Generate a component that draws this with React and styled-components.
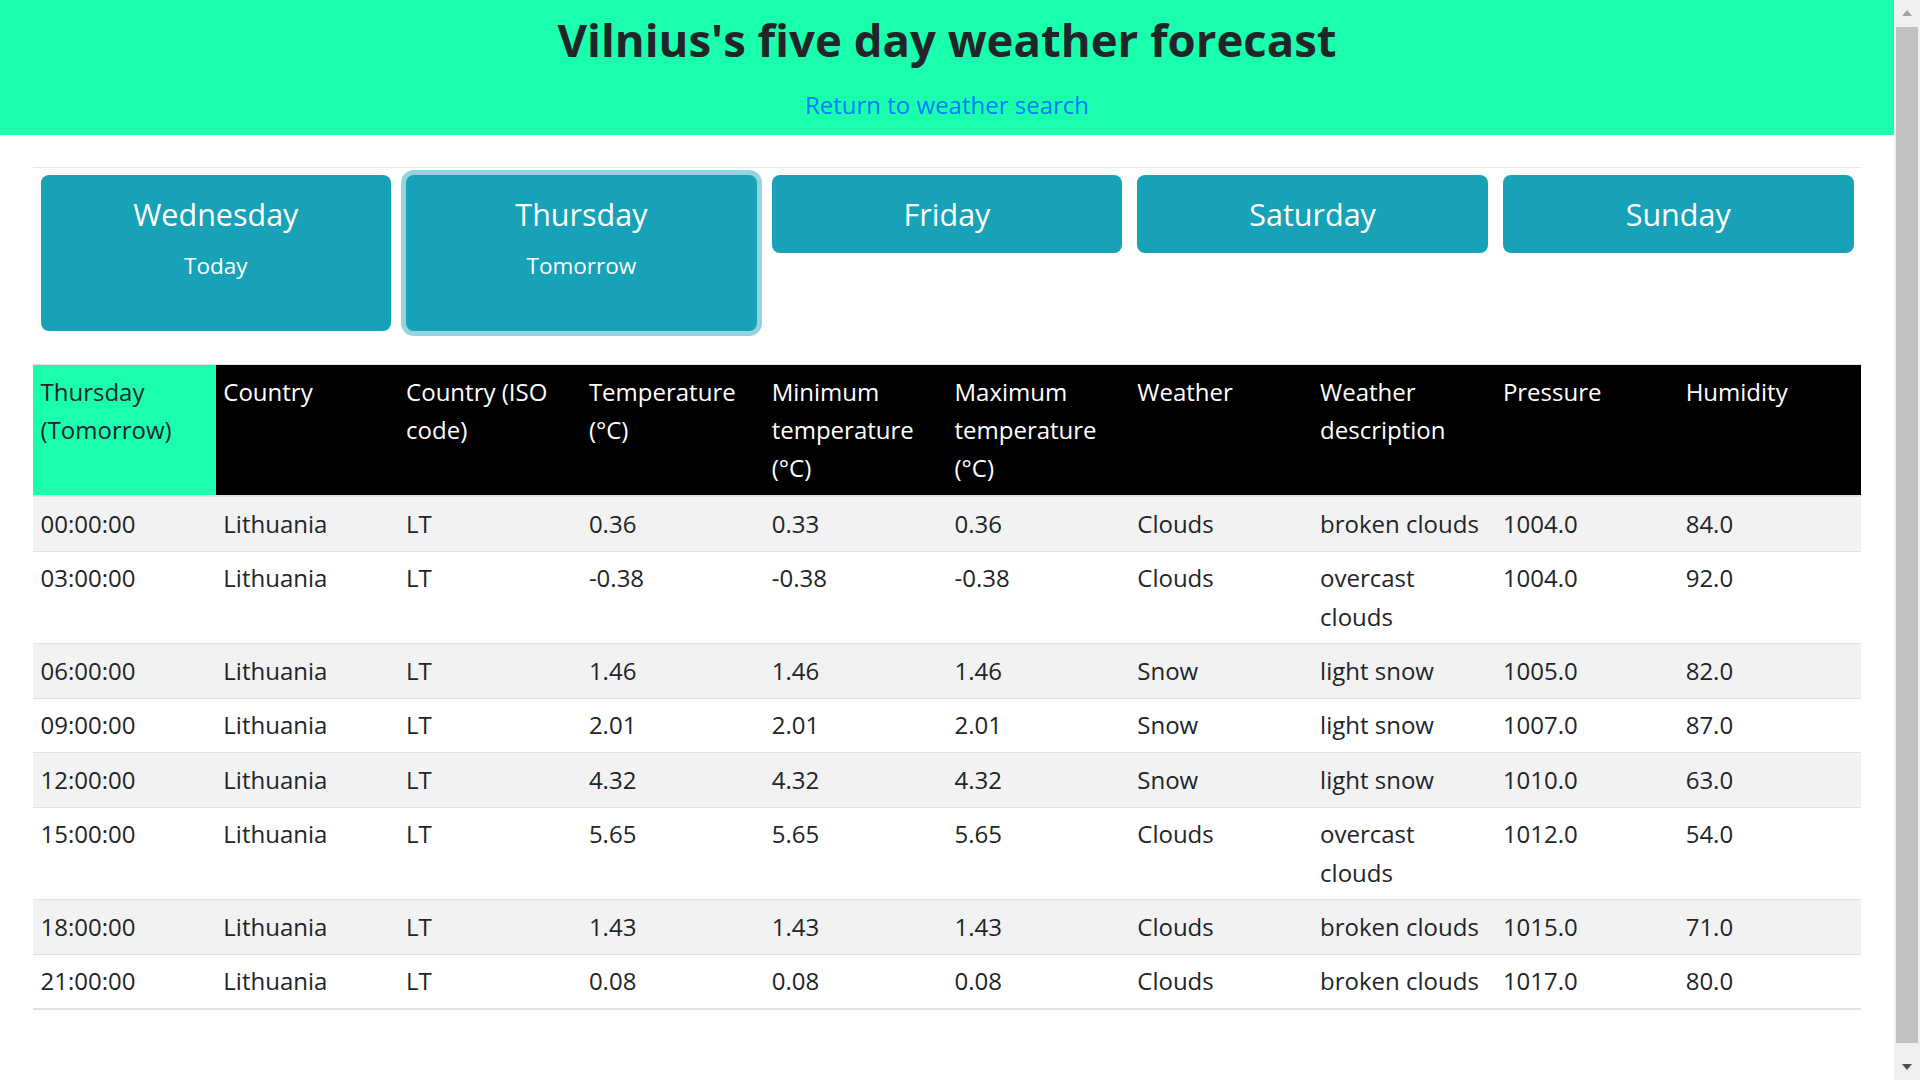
import React from "react";
import styled, { createGlobalStyle, css } from "styled-components";

const GlobalStyle = createGlobalStyle`
  html, body { margin: 0; padding: 0; }
  body {
    font-family: "Open Sans", "Noto Sans", "Liberation Sans", sans-serif;
    color: #212529;
    background: #fff;
  }
  * { box-sizing: border-box; }
`;

const Page = styled.div`
  margin-right: 26px;
`;

const Header = styled.header`
  background: #1affad;
  text-align: center;
  padding: 13px 0 12px;
`;

const Title = styled.h1`
  margin: 0;
  font-size: 45.5px;
  line-height: 53px;
  font-weight: 700;
  color: #212529;
`;

const BackLink = styled.a`
  display: inline-block;
  margin-top: 21px;
  font-size: 24px;
  line-height: 36px;
  color: #007bff;
  text-decoration: none;
`;

const Main = styled.main`
  padding: 0 33px 83px;
`;

const Divider = styled.hr`
  margin: 32px 0 7px;
  border: 0;
  border-top: 1px solid rgba(0, 0, 0, 0.1);
`;

const DayRow = styled.div`
  display: grid;
  grid-template-columns: repeat(5, 1fr);
  gap: 15px;
  padding: 0 7.5px;
  align-items: start;
`;

const DayButton = styled.button`
  font-family: inherit;
  border: 0;
  border-radius: 8px;
  background: #17a2b8;
  color: #fff;
  padding: 15px;
  text-align: center;
  cursor: pointer;
  ${(p) =>
    p.$active &&
    css`
      box-shadow: 0 0 0 5px rgba(58, 176, 195, 0.55);
    `}
`;

const DayName = styled.div`
  font-size: 30.5px;
  line-height: 48px;
`;

const DaySub = styled.div`
  font-size: 22.5px;
  line-height: 36px;
  margin: 10px 0 32px;
`;

const Table = styled.table`
  margin-top: 33px;
  width: 100%;
  table-layout: fixed;
  border-collapse: collapse;
  font-size: 24px;
  line-height: 38.4px;
  border-bottom: 2px solid #dee2e6;
`;

const HeadCell = styled.th`
  text-align: left;
  vertical-align: top;
  font-weight: 400;
  padding: 7.5px;
  border-top: 1px solid #dee2e6;
  border-bottom: 2px solid #dee2e6;
  background: ${(p) => (p.$highlight ? "#1affad" : "#000")};
  color: ${(p) => (p.$highlight ? "#212529" : "#fff")};
`;

const Row = styled.tr`
  background: ${(p) => (p.$striped ? "#f2f2f2" : "#fff")};
`;

const Cell = styled.td`
  vertical-align: top;
  padding: 7.5px;
  border-top: 1px solid #dee2e6;
`;

/* window scrollbar drawn over the right edge */
const ScrollTrack = styled.div`
  position: fixed;
  top: 0;
  right: 0;
  width: 26px;
  height: 100vh;
  background: #f0f0f0;
  display: flex;
  flex-direction: column;
  align-items: center;
`;

const ScrollArrow = styled.div`
  height: 26px;
  width: 100%;
  display: flex;
  align-items: center;
  justify-content: center;
  flex: none;
`;

const ScrollThumb = styled.div`
  width: 22px;
  height: 1016px;
  margin: 1px 0 11px;
  background: #c1c1c1;
  flex: none;
`;

const days = [
  { name: "Wednesday", sub: "Today" },
  { name: "Thursday", sub: "Tomorrow", active: true },
  { name: "Friday" },
  { name: "Saturday" },
  { name: "Sunday" },
];

const headers = [
  "Country",
  "Country (ISO code)",
  "Temperature (°C)",
  "Minimum temperature (°C)",
  "Maximum temperature (°C)",
  "Weather",
  "Weather description",
  "Pressure",
  "Humidity",
];

const rows = [
  ["00:00:00", "0.36", "0.33", "0.36", "Clouds", "broken clouds", "1004.0", "84.0"],
  ["03:00:00", "-0.38", "-0.38", "-0.38", "Clouds", "overcast clouds", "1004.0", "92.0"],
  ["06:00:00", "1.46", "1.46", "1.46", "Snow", "light snow", "1005.0", "82.0"],
  ["09:00:00", "2.01", "2.01", "2.01", "Snow", "light snow", "1007.0", "87.0"],
  ["12:00:00", "4.32", "4.32", "4.32", "Snow", "light snow", "1010.0", "63.0"],
  ["15:00:00", "5.65", "5.65", "5.65", "Clouds", "overcast clouds", "1012.0", "54.0"],
  ["18:00:00", "1.43", "1.43", "1.43", "Clouds", "broken clouds", "1015.0", "71.0"],
  ["21:00:00", "0.08", "0.08", "0.08", "Clouds", "broken clouds", "1017.0", "80.0"],
];

export default function App() {
  return (
    <>
      <GlobalStyle />
      <Page>
        <Header>
          <Title>Vilnius's five day weather forecast</Title>
          <BackLink href="#">Return to weather search</BackLink>
        </Header>
        <Main>
          <Divider />
          <DayRow>
            {days.map((d) => (
              <DayButton key={d.name} $active={d.active}>
                <DayName>{d.name}</DayName>
                {d.sub && <DaySub>{d.sub}</DaySub>}
              </DayButton>
            ))}
          </DayRow>
          <Table>
            <thead>
              <tr>
                <HeadCell $highlight>Thursday (Tomorrow)</HeadCell>
                {headers.map((h) => (
                  <HeadCell key={h}>{h}</HeadCell>
                ))}
              </tr>
            </thead>
            <tbody>
              {rows.map((r, i) => (
                <Row key={r[0]} $striped={i % 2 === 0}>
                  <Cell>{r[0]}</Cell>
                  <Cell>Lithuania</Cell>
                  <Cell>LT</Cell>
                  {r.slice(1).map((v, j) => (
                    <Cell key={j}>{v}</Cell>
                  ))}
                </Row>
              ))}
            </tbody>
          </Table>
        </Main>
      </Page>
      <ScrollTrack aria-hidden="true">
        <ScrollArrow>
          <svg width="12" height="8" viewBox="0 0 12 8">
            <polygon points="6,1 11,7 1,7" fill="#a3a3a3" />
          </svg>
        </ScrollArrow>
        <ScrollThumb />
        <ScrollArrow>
          <svg width="12" height="8" viewBox="0 0 12 8">
            <polygon points="1,1 11,1 6,7" fill="#505050" />
          </svg>
        </ScrollArrow>
      </ScrollTrack>
    </>
  );
}
